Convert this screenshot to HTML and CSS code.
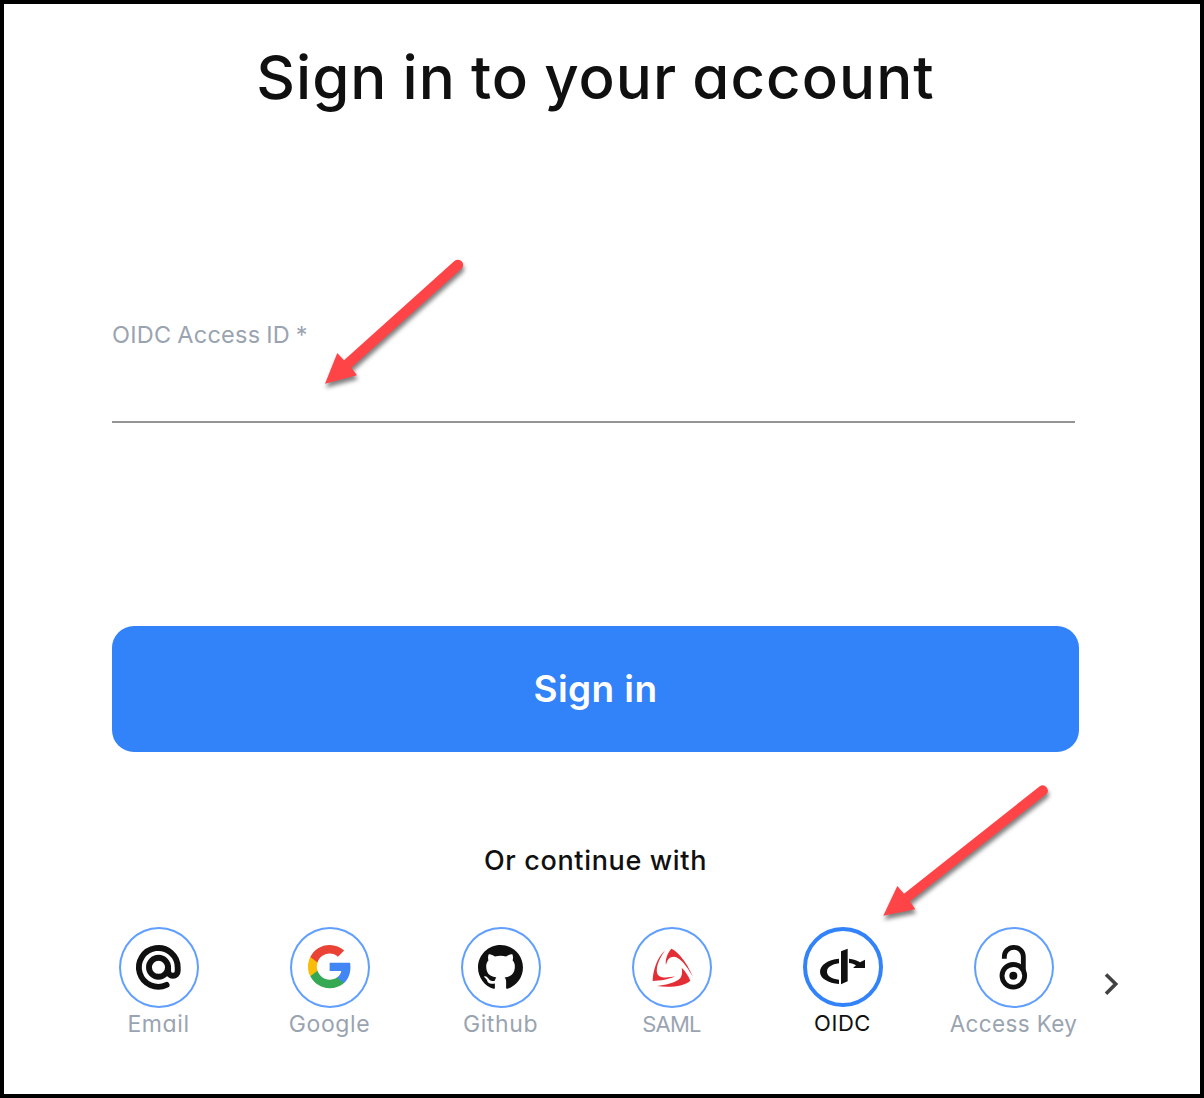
FILE: index.html
```html
<!DOCTYPE html>
<html lang="en">
<head>
<meta charset="utf-8">
<title>Sign in</title>
<link rel="stylesheet" href="styles.css">
</head>
<body>
<main class="screen">
  <h1 class="title"><span>Sign in to your account</span></h1>
  <form class="form">
    <label class="field-label" for="access-id"><span>OIDC Access ID *</span></label>
    <input class="field" id="access-id" type="text">
    <button class="submit" type="button"><span>Sign in</span></button>
  </form>
  <p class="divider"><span>Or continue with</span></p>
  <nav class="providers">
    <a class="provider"><span class="ring"><svg viewBox="0 0 80 80" fill="none" stroke="#101010" stroke-width="5.9" stroke-linecap="round"><path d="M47.6 57.900A19.400 19.400 0 1 1 58.700 40.400v3.600a4.800 4.800 0 0 1-9.600 0v-3.700"/><circle cx="39.500" cy="40.300" r="9.500"/></svg></span><span class="name email">Email</span></a>
    <a class="provider"><span class="ring"><svg viewBox="0 0 80 80"><g transform="translate(16 16) scale(1.97)"><path fill="#4285F4" d="M22.56 12.25c0-.78-.07-1.53-.2-2.25H12v4.26h5.92c-.26 1.37-1.04 2.53-2.21 3.31v2.77h3.57c2.08-1.92 3.28-4.74 3.28-8.09z"/><path fill="#34A853" d="M12 23c2.97 0 5.46-.98 7.28-2.66l-3.57-2.77c-.98.66-2.23 1.06-3.71 1.06-2.86 0-5.29-1.93-6.16-4.53H2.18v2.84C3.99 20.53 7.7 23 12 23z"/><path fill="#FBBC05" d="M5.84 14.09c-.22-.66-.35-1.36-.35-2.09s.13-1.43.35-2.09V7.07H2.18C1.43 8.55 1 10.22 1 12s.43 3.45 1.18 4.93l3.66-2.84z"/><path fill="#EA4335" d="M12 5.38c1.62 0 3.06.56 4.21 1.64l3.15-3.15C17.45 2.09 14.97 1 12 1 7.7 1 3.99 3.47 2.18 7.07l3.66 2.84c.87-2.6 3.3-4.53 6.16-4.53z"/></g></svg></span><span class="name google">Google</span></a>
    <a class="provider"><span class="ring"><svg viewBox="0 0 80 80"><path fill="#101010" transform="translate(17 18) scale(2.81)" d="M8 0C3.58 0 0 3.58 0 8c0 3.54 2.29 6.53 5.47 7.59.4.07.55-.17.55-.38 0-.19-.01-.82-.01-1.49-2.01.37-2.53-.49-2.69-.94-.09-.23-.48-.94-.82-1.13-.28-.15-.68-.52-.01-.53.63-.01 1.08.58 1.23.82.72 1.21 1.87.87 2.33.66.07-.52.28-.87.51-1.07-1.78-.2-3.64-.89-3.64-3.95 0-.87.31-1.59.82-2.15-.08-.2-.36-1.02.08-2.12 0 0 .67-.21 2.2.82.64-.18 1.32-.27 2-.27s1.36.09 2 .27c1.53-1.04 2.2-.82 2.2-.82.44 1.1.16 1.92.08 2.12.51.56.82 1.27.82 2.15 0 3.07-1.87 3.75-3.65 3.95.29.25.54.73.54 1.48 0 1.07-.01 1.93-.01 2.2 0 .21.15.46.55.38A8.01 8.01 0 0 0 16 8c0-4.42-3.58-8-8-8z"/></svg></span><span class="name github">Github</span></a>
    <a class="provider"><span class="ring"><svg viewBox="30 36 240 240" fill="#e32e35"><path d="M148 101C162 106 193 136 213 186C192 149 174 127 156 125C142 125 135 135 132 150C129 134 136 115 148 101Z"/><path d="M105 213C132 210 153 205 167 196C180 188 182 176 179 158C190 168 200 184 205 197C192 211 146 220 105 213Z"/><path d="M92 198C93 168 104 130 129 106C107 138 99 166 108 180C118 191 141 188 159 184C141 194 115 197 92 198Z"/></svg></span><span class="name saml">SAML</span></a>
    <a class="provider selected"><span class="ring"><svg viewBox="30 36 240 240" fill="#101010"><path d="M144 109L164 101V199L144 208Z"/><path d="M138 131C104 134 81 150 81 171C81 190 106 205 138 207V194C116 191 102 183 102 170C102 157 116 148 138 145Z"/><path d="M168 131C181 133 192 136 201 142L216 134V159H180L189 151C183 147 176 145 168 144Z"/></svg></span><span class="name oidc">OIDC</span></a>
    <a class="provider"><span class="ring"><svg viewBox="87 36 240 240" fill="none" stroke="#101010" stroke-width="14.5"><circle cx="205" cy="182.500" r="34"/><path d="M178 131V125A28.500 28 0 0 1 235 125V167"/><circle cx="205" cy="182.500" r="12" fill="#101010" stroke="none"/></svg></span><span class="name key">Access Key</span></a>
    <svg class="next" viewBox="0 0 16 24" fill="none" stroke="#424242" stroke-width="3.6"><path d="M2 2.500L11.700 12L2 21.700"/></svg>
  </nav>
  <svg class="pointer" viewBox="0 0 1204 1098" fill="#fe4447"><g><path d="M325 383.700L337.300 353L344 360.300L454.400 261.100A5.200 5.200 0 0 1 461.500 268.700L351.300 367.700L357 375.300Z"/></g><g><path d="M883.300 915.700L897.300 886L904 893.700L1039.800 786.200A5.200 5.200 0 0 1 1046.400 794.100L910 901.300L915.300 909.300Z"/></g></svg>
</main>
</body>
</html>
```
FILE: styles.css
```css
* { box-sizing: border-box; }
body {
  margin: 0;
  background: #fff;
  color: #101010;
  font-family: Inter, "Open Sans", sans-serif;
  font-feature-settings: "cv11" 1;
}
.screen {
  position: relative;
  display: flex;
  flex-direction: column;
  height: 1098px;
  border: 4px solid #000;
  padding: 34px 121px 0 108px;
  overflow: hidden;
}
.title {
  margin: 0;
  height: 80px;
  line-height: 79px;
  text-align: center;
  white-space: nowrap;
  font-size: 60px;
  font-weight: 500;
  letter-spacing: 1.05px;
  word-spacing: -2px;
}
.form {
  display: flex;
  flex-direction: column;
  margin-top: 199px;
}
.field-label {
  height: 36px;
  line-height: 36px;
  color: #9aa4b1;
  font-size: 23.5px;
  letter-spacing: .25px;
  word-spacing: -1px;
}
.field {
  width: 963px;
  height: 70px;
  border: 0;
  border-bottom: 2px solid #949494;
  background: none;
  outline: 0;
  font: inherit;
}
.submit {
  height: 126px;
  margin-top: 203px;
  padding-bottom: 3px;
  border: 0;
  border-radius: 22px;
  background: #3282fa;
  color: #fff;
  font: inherit;
  font-size: 37px;
  font-weight: 600;
  letter-spacing: .4px;
}
.divider {
  margin: 90px 0 0;
  height: 40px;
  line-height: 38px;
  text-align: center;
  font-size: 27px;
  font-weight: 500;
  letter-spacing: .65px;
}
.providers {
  display: flex;
  align-items: flex-start;
  width: 1060px;
  margin: 45px 0 0 -39px;
}
.provider {
  display: flex;
  flex: 0 0 171px;
  flex-direction: column;
  align-items: center;
  color: #9aa4b1;
  font-size: 22px;
}
.ring {
  display: flex;
  width: 80px;
  height: 81px;
  border: 2px solid #619fff;
  border-radius: 50%;
}
.ring svg { flex: none; width: 80px; height: 80px; margin: -2px; }
.name { height: 32px; line-height: 32px; white-space: nowrap; }
.email, .google, .github { font-size: 23px; letter-spacing: .6px; }
.saml { letter-spacing: -.8px; }
.oidc { letter-spacing: .6px; }
.key { font-size: 22.5px; letter-spacing: .35px; }
.selected { color: #101010; }
.selected .ring { height: 80px; border: 4px solid #3282fa; }
.selected .ring svg { margin: -4px; }
.next { width: 16px; height: 24px; margin: 45px 0 0 5px; }
.pointer {
  position: absolute;
  left: -4px;
  top: -4px;
  width: 1204px;
  height: 1098px;
  pointer-events: none;
}
.pointer g { filter: drop-shadow(1px 4px 2px rgba(0, 0, 0, .5)); }
```
